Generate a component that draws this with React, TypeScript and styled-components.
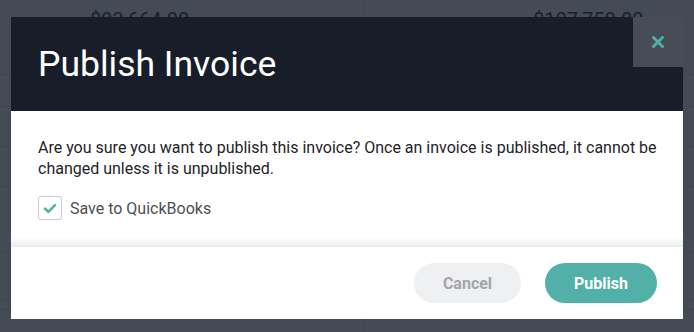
import React from 'react'
import { styled, createGlobalStyle } from 'styled-components'

const GlobalStyle = createGlobalStyle`
  html, body {
    margin: 0;
    padding: 0;
    background: #ffffff;
    font-family: Roboto, "Liberation Sans", sans-serif;
  }
  * { box-sizing: border-box; }
`

const rows = [
    { left: '$93,664.00', right: '$107,750.00', height: 75 },
    { left: '', right: '', height: 32 },
    { left: '', right: '', height: 40 },
    { left: '', right: '', height: 40 },
    { left: '', right: '', height: 66 },
    { left: '', right: '', height: 47 },
    { left: '', right: '', height: 10 },
    { left: '', right: '', height: 30 },
]

const App = () => {
    return (
        <Page>
            <GlobalStyle />
            <Table>
                {rows.map((row, i) => (
                    <Row key={i} h={row.height}>
                        <Cell>{row.left && <Amount>{row.left}</Amount>}</Cell>
                        <Cell>{row.right && <Amount>{row.right}</Amount>}</Cell>
                    </Row>
                ))}
            </Table>

            <Overlay>
                <Modal>
                    <Header>
                        <Title>Publish Invoice</Title>
                        <CloseButton aria-label="Close">
                            <svg width="12" height="12" viewBox="0 0 12 12">
                                <path d="M1.5 1.5 L10.5 10.5 M10.5 1.5 L1.5 10.5" stroke="#4fb0a8" strokeWidth="2.8" strokeLinecap="square" />
                            </svg>
                        </CloseButton>
                    </Header>
                    <Body>
                        <Message>
                            Are you sure you want to publish this invoice? Once an invoice is published, it cannot be changed unless it is unpublished.
                        </Message>
                        <CheckRow>
                            <CheckBox>
                                <svg width="14" height="11" viewBox="0 0 14 11">
                                    <path d="M2 5.6 L5.4 8.8 L12 2.2" fill="none" stroke="#4fb0a8" strokeWidth="2.6" strokeLinecap="round" strokeLinejoin="round" />
                                </svg>
                            </CheckBox>
                            <CheckLabel>Save to QuickBooks</CheckLabel>
                        </CheckRow>
                    </Body>
                    <Footer>
                        <Button variant="cancel">Cancel</Button>
                        <Button variant="primary">Publish</Button>
                    </Footer>
                </Modal>
            </Overlay>
        </Page>
    )
}

export default App

const Page = styled.div`
position: relative;
width: 694px;
height: 332px;
overflow: hidden;
background: #ffffff;
`

const Table = styled.div`
display: flex;
flex-direction: column;
`

const Row = styled.div<{ h: number }>`
display: grid;
grid-template-columns: 364px 1fr;
height: ${({ h }) => h}px;
border-bottom: 1px solid #dcdfe3;
`

const Cell = styled.div`
display: flex;
align-items: flex-start;
padding-top: 8px;
border-right: 1px solid #eceef0;

&:first-child { padding-left: 90px; }
&:last-child { padding-left: 169px; border-right: 0; }
`

const Amount = styled.span`
font-size: 20px;
color: #1f2a36;
`

const Overlay = styled.div`
position: absolute;
inset: 0;
background: rgba(23, 30, 41, 0.8);
padding: 17px 11px 13px;
`

const Modal = styled.div`
position: relative;
width: 672px;
height: 302px;
display: flex;
flex-direction: column;
background: #ffffff;
`

const Header = styled.div`
position: relative;
height: 94px;
display: flex;
align-items: center;
padding: 0 27px;
background: #171e29;
`

const Title = styled.h1`
margin: 0;
font-size: 35.5px;
font-weight: 400;
color: #ffffff;
`

const CloseButton = styled.button`
position: absolute;
top: 0;
right: 0;
width: 50px;
height: 50px;
display: flex;
justify-content: center;
align-items: center;
padding: 0;
border: 0;
background: #474d56;
cursor: pointer;
`

const Body = styled.div`
flex: 1;
padding: 26px 18px 0 27px;
background: linear-gradient(to bottom, #ffffff 0, #ffffff calc(100% - 10px), #ebebeb 100%);
`

const Message = styled.p`
margin: 0;
font-size: 16px;
line-height: 21px;
color: #1f2329;
`

const CheckRow = styled.div`
display: flex;
align-items: center;
gap: 8px;
margin-top: 17px;
`

const CheckBox = styled.div`
width: 24px;
height: 24px;
display: flex;
justify-content: center;
align-items: center;
border: 1px solid #c9cccf;
border-radius: 3px;
`

const CheckLabel = styled.span`
font-size: 16px;
color: #4b5058;
`

const Footer = styled.div`
height: 72px;
display: flex;
justify-content: flex-end;
align-items: center;
gap: 24px;
padding: 0 26px 0 0;
background: #ffffff;
`

const Button = styled.button<{ variant: 'cancel' | 'primary' }>`
height: 40px;
width: ${({ variant }) => variant === 'cancel' ? '107px' : '112px'};
border: 0;
border-radius: 20px;
font-family: Roboto, "Liberation Sans", sans-serif;
font-size: 16px;
font-weight: 700;
background: ${({ variant }) => variant === 'cancel' ? '#eff0f2' : '#52b0a8'};
color: ${({ variant }) => variant === 'cancel' ? '#a3a5a9' : '#ffffff'};
cursor: pointer;
`
